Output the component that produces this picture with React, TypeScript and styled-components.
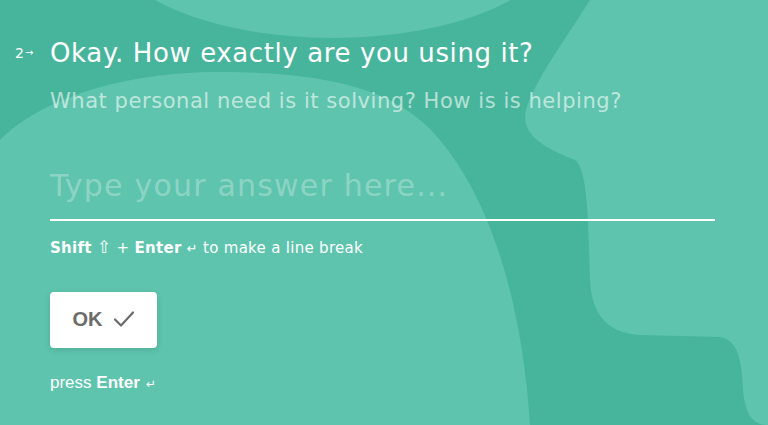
import React from "react";
import styled, { createGlobalStyle } from "styled-components";

const Global = createGlobalStyle`
  html, body { margin: 0; padding: 0; }
  body { background: #47b59c; overflow: hidden; }
  * { box-sizing: border-box; }
`;

const Page = styled.div`
  position: relative;
  width: 768px;
  height: 425px;
  overflow: hidden;
  background: #47b59c;
  font-family: "DejaVu Sans", "Open Sans", sans-serif;
  color: #ffffff;
`;

const Backdrop = styled.svg`
  position: absolute;
  inset: 0;
  width: 768px;
  height: 425px;
`;

const Content = styled.div`
  position: relative;
  padding: 38px 53px 0 15px;
  display: flex;
  align-items: flex-start;
`;

const Counter = styled.div`
  width: 35px;
  display: flex;
  align-items: center;
  gap: 1px;
  font-size: 14px;
  line-height: 30px;
`;

const Arrow = styled.span`
  font-size: 10px;
  line-height: 30px;
`;

const Body = styled.div`
  flex: 1;
  display: flex;
  flex-direction: column;
`;

const Question = styled.h1`
  margin: 0;
  font-size: 26px;
  font-weight: 400;
  line-height: 30px;
  letter-spacing: 0.6px;
  white-space: nowrap;
`;

const Hint = styled.p`
  margin: 21px 0 0;
  font-size: 21px;
  line-height: 24px;
  color: rgba(255, 255, 255, 0.6);
  letter-spacing: 0.55px;
  white-space: nowrap;
`;

const Field = styled.div`
  margin-top: 53px;
  height: 55px;
  border-bottom: 2px solid #ffffff;
  display: flex;
  align-items: flex-start;
`;

const Placeholder = styled.span`
  font-size: 30px;
  line-height: 40px;
  color: rgba(255, 255, 255, 0.3);
  letter-spacing: 1.2px;
`;

const Tip = styled.div`
  margin-top: 17px;
  height: 20px;
  font-size: 15px;
  line-height: 20px;
  letter-spacing: 0.3px;
`;

const B = styled.b`
  font-weight: 700;
`;

const Sym = styled.span<{ $size?: number }>`
  font-size: ${(p) => p.$size ?? 13}px;
  line-height: 1;
`;

const OkButton = styled.button`
  margin-top: 34px;
  width: 107px;
  height: 56px;
  border: none;
  border-radius: 4px;
  background: #ffffff;
  box-shadow: 0 2px 6px rgba(0, 0, 0, 0.12);
  display: flex;
  align-items: center;
  justify-content: center;
  gap: 10px;
  font-family: "Liberation Sans", Arial, sans-serif;
  font-size: 20px;
  font-weight: 700;
  color: #6b6b6b;
  padding: 0 0 2px;
`;

const Press = styled.div`
  margin-top: 26px;
  font-family: "Liberation Sans", Arial, sans-serif;
  font-size: 17px;
  line-height: 18px;
`;

const PressSym = styled.span`
  font-family: "DejaVu Sans", sans-serif;
  font-size: 12px;
  margin-left: 6px;
`;

export default function App() {
  return (
    <>
      <Global />
      <Page>
        <Backdrop viewBox="0 0 768 425">
          <ellipse cx="333" cy="-60" rx="225" ry="98" fill="#5ec4ad" />
          <path
            d="M0,140 C40,100 120,72 220,72 C330,72 400,90 440,140 C490,200 522,300 530,425 L0,425 Z"
            fill="#5ec4ad"
          />
          <path
            d="M590,0 C565,40 535,80 526,110 C520,135 545,148 575,160 C588,170 588,220 590,280 C592,320 612,333 640,335 L720,337 C738,340 742,360 743,390 C745,410 750,425 768,425 L768,0 Z"
            fill="#5ec4ad"
          />
        </Backdrop>
        <Content>
          <Counter>
            2<Arrow>→</Arrow>
          </Counter>
          <Body>
            <Question>Okay. How exactly are you using it?</Question>
            <Hint>What personal need is it solving? How is is helping?</Hint>
            <Field>
              <Placeholder>Type your answer here...</Placeholder>
            </Field>
            <Tip>
              <B>Shift</B> <Sym $size={17}>⇧</Sym> + <B>Enter</B> <Sym>↵</Sym> to make a line break
            </Tip>
            <OkButton>
              OK
              <svg width="22" height="18" viewBox="0 0 22 18" fill="none">
                <path d="M2 9.5 L8 15.5 L20 2.5" stroke="#6b6b6b" strokeWidth="2.2" strokeLinecap="round" strokeLinejoin="round" />
              </svg>
            </OkButton>
            <Press>
              press <B>Enter</B>
              <PressSym>↵</PressSym>
            </Press>
          </Body>
        </Content>
      </Page>
    </>
  );
}
